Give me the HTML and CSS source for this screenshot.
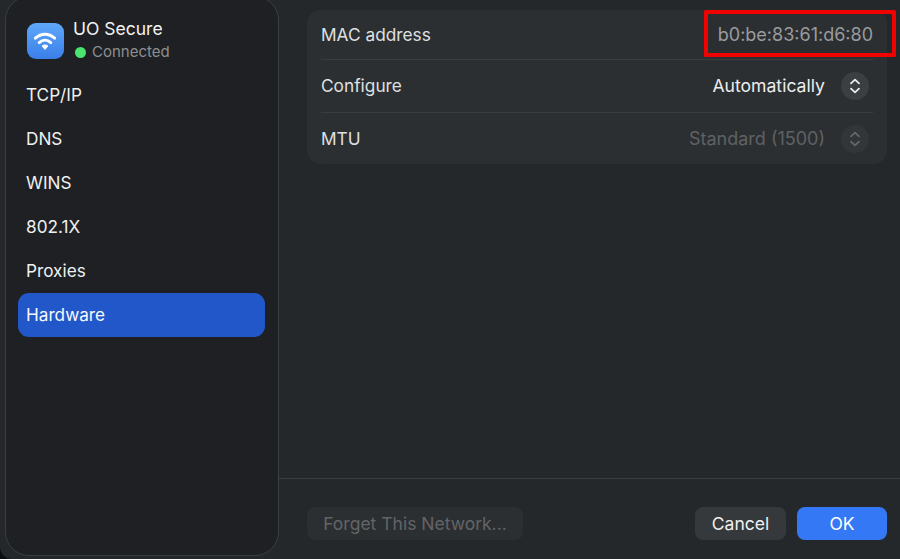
FILE: index.html
```html
<!DOCTYPE html>
<html lang="en">
<head>
<meta charset="utf-8">
<title>UO Secure – Hardware</title>
<link rel="stylesheet" href="styles.css">
</head>
<body>
<div class="window">
  <aside class="sidebar">
    <div class="net">
      <div class="net-icon">
        <svg viewBox="0 0 36 36" width="36" height="36" aria-hidden="true">
          <path class="arc" d="M8.4 15.2C14 10 22 10 27.6 15.2"/>
          <path class="arc" d="M12.2 19.6C15.6 16.6 20.4 16.6 23.8 19.6"/>
          <path class="wedge" d="M15 23C16.8 21.6 19.2 21.6 21 23L18 26.4Z"/>
        </svg>
      </div>
      <div class="net-text">
        <div class="net-name">UO Secure</div>
        <div class="net-status"><span class="dot"></span>Connected</div>
      </div>
    </div>
    <nav class="nav">
      <div class="nav-item">TCP/IP</div>
      <div class="nav-item">DNS</div>
      <div class="nav-item">WINS</div>
      <div class="nav-item">802.1X</div>
      <div class="nav-item">Proxies</div>
      <div class="nav-item active">Hardware</div>
    </nav>
  </aside>
  <main class="main">
    <div class="content">
      <section class="card">
        <div class="row row-mac">
          <span class="label">MAC address</span>
          <span class="value muted">b0:be:83:61:d6:80</span>
        </div>
        <div class="row row-config">
          <span class="label">Configure</span>
          <div class="control">
            <span class="value">Automatically</span>
            <span class="stepper">
              <svg viewBox="0 0 28 28" width="28" height="28" aria-hidden="true"><path d="M10 11.4L14 7.6L18 11.4M10 16.6L14 20.4L18 16.6"/></svg>
            </span>
          </div>
        </div>
        <div class="row row-mtu">
          <span class="label">MTU</span>
          <div class="control disabled">
            <span class="value">Standard (1500)</span>
            <span class="stepper">
              <svg viewBox="0 0 28 28" width="28" height="28" aria-hidden="true"><path d="M10 11.4L14 7.6L18 11.4M10 16.6L14 20.4L18 16.6"/></svg>
            </span>
          </div>
        </div>
      </section>
    </div>
    <footer class="footer">
      <button class="btn btn-forget" type="button">Forget This Network...</button>
      <div class="actions">
        <button class="btn btn-cancel" type="button">Cancel</button>
        <button class="btn btn-ok" type="button">OK</button>
      </div>
    </footer>
  </main>
  <div class="highlight"></div>
</div>
</body>
</html>
```
FILE: styles.css
```css
* { box-sizing: border-box; }
html, body { height: 100%; }
body {
  margin: 0;
  background: #0c0d0e;
  overflow: hidden;
  font-family: Inter, "Liberation Sans", sans-serif;
  color: #e9eaeb;
}
.window {
  position: relative;
  display: flex;
  height: 559px;
  padding-left: 5px;
  background: #25282b;
  border-bottom-left-radius: 12px;
  overflow: hidden;
}
.sidebar {
  flex: none;
  width: 274px;
  height: 560px;
  margin-top: -4px;
  padding: 26px 13px 0 12px;
  background: #1e2023;
  border: 1px solid #3b3e41;
  border-radius: 24px;
}
.net { display: flex; gap: 9px; padding-left: 9px; }
.net-icon {
  flex: none;
  width: 37px;
  height: 36px;
  border-radius: 9px;
  background: linear-gradient(180deg, #5fa8fa, #3a7fe9);
}
.net-icon svg { display: block; }
.arc { fill: none; stroke: #fff; stroke-width: 3; stroke-linecap: round; }
.wedge { fill: #fff; stroke: #fff; stroke-width: 1; stroke-linejoin: round; }
.net-text { margin-top: -5px; }
.net-name { font-size: 17.5px; line-height: 22px; color: #f2f3f3; }
.net-status {
  display: flex;
  align-items: center;
  gap: 6px;
  margin-top: 1px;
  padding-left: 2px;
  font-size: 15px;
  line-height: 22px;
  color: #8d8f91;
}
.dot { width: 11px; height: 11px; border-radius: 50%; background: #4be46f; }
.nav { margin-top: 10px; }
.nav-item {
  display: flex;
  align-items: center;
  height: 44px;
  padding: 0 0 2px 8px;
  font-size: 17.2px;
  color: #eff0f0;
  border-radius: 11px;
}
.nav-item.active { background: #2257c9; color: #f6f8fd; }
.main { flex: 1; display: flex; flex-direction: column; min-width: 0; }
.content { flex: 1; padding: 10px 13px 0 28px; }
.card {
  padding: 0 14px;
  background: #2c2f32;
  border-radius: 14px;
}
.row {
  display: flex;
  align-items: center;
  justify-content: space-between;
  font-size: 17.3px;
}
.row-mac { height: 50px; border-bottom: 1px solid #3a3d40; }
.row-config { height: 53px; padding-bottom: 1px; border-bottom: 1px solid #3a3d40; }
.row-mtu { height: 51px; }
.label { color: #dfe0e1; }
.value { color: #eceded; font-size: 17.6px; }
.value.muted { color: #9a9b9d; font-size: 18px; }
.control { display: flex; align-items: center; gap: 16px; margin-right: 4px; }
.stepper {
  width: 28px;
  height: 28px;
  border-radius: 50%;
  background: #3c3f42;
}
.stepper svg { display: block; }
.stepper path {
  fill: none;
  stroke: #eceded;
  stroke-width: 1.7;
  stroke-linecap: round;
  stroke-linejoin: round;
}
.control.disabled .value { color: #5f6164; font-size: 18px; }
.control.disabled .stepper { background: #333639; }
.control.disabled .stepper path { stroke: #66686b; }
.footer {
  flex: none;
  height: 81px;
  display: flex;
  align-items: flex-start;
  justify-content: space-between;
  padding: 28px 13px 0 28px;
  border-top: 1px solid #3b3e41;
}
.actions { display: flex; gap: 11px; }
.btn {
  height: 33px;
  padding: 0;
  border: 0;
  border-radius: 8px;
  font-family: inherit;
  font-size: 17.5px;
}
.btn-forget { width: 216px; background: #2c2f32; color: #626466; }
.btn-cancel { width: 91px; background: #36393c; color: #eff0f0; }
.btn-ok { width: 90px; background: #3478f6; color: #fff; }
.highlight {
  position: absolute;
  left: 704px;
  top: 10px;
  width: 192px;
  height: 47px;
  border: 4.5px solid #f00200;
  border-radius: 1.5px;
}
```
